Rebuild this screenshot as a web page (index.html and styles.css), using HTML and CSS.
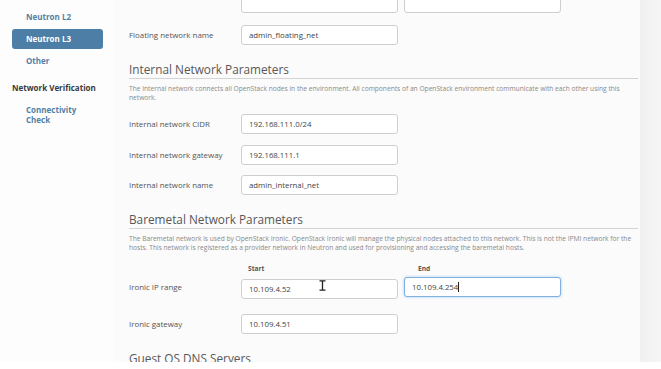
FILE: index.html
```html
<!DOCTYPE html>
<html lang="en">
<head>
  <meta charset="UTF-8">
  <title>Network Settings - Neutron L3</title>
  <link rel="stylesheet" href="styles.css">
</head>
<body>
  <div class="screen">
    <!-- Left navigation -->
    <nav class="sidebar">
      <a class="nav-link">Neutron L2</a>
      <a class="nav-link active">Neutron L3</a>
      <a class="nav-link">Other</a>
      <div class="nav-group">Network Verification</div>
      <a class="nav-link multi">Connectivity<br>Check</a>
    </nav>

    <!-- Settings form -->
    <main class="content">
      <div class="row row-cut">
        <div class="label"></div>
        <input class="field" type="text" value="">
        <input class="field" type="text" value="">
      </div>
      <div class="row">
        <div class="label">Floating network name</div>
        <input class="field" type="text" value="admin_floating_net">
      </div>

      <h3 class="section-title">Internal Network Parameters</h3>
      <p class="section-desc">The Internal network connects all OpenStack nodes in the environment. All components of an OpenStack environment communicate with each other using this network.</p>
      <div class="row">
        <div class="label">Internal network CIDR</div>
        <input class="field" type="text" value="192.168.111.0/24">
      </div>
      <div class="row">
        <div class="label">Internal network gateway</div>
        <input class="field" type="text" value="192.168.111.1">
      </div>
      <div class="row">
        <div class="label">Internal network name</div>
        <input class="field" type="text" value="admin_internal_net">
      </div>

      <h3 class="section-title">Baremetal Network Parameters</h3>
      <p class="section-desc">The Baremetal network is used by OpenStack Ironic. OpenStack Ironic will manage the physical nodes attached to this network. This is not the IPMI network for the hosts. This network is registered as a provider network in Neutron and used for provisioning and accessing the baremetal hosts.</p>
      <div class="range-head">
        <span class="range-col">Start</span>
        <span class="range-col">End</span>
      </div>
      <div class="row row-range">
        <div class="label">Ironic IP range</div>
        <div class="field-wrap">
          <input class="field" type="text" value="10.109.4.52">
          <!-- mouse I-beam pointer -->
          <svg class="ibeam" width="7" height="11" viewBox="0 0 7 11">
            <path d="M0.5 0.8h6M0.5 10.2h6M3.5 0.8v9.4" stroke="#222" stroke-width="1.3" fill="none"/>
          </svg>
        </div>
        <div class="field focus">10.109.4.254<span class="caret"></span></div>
      </div>
      <div class="row row-gap">
        <div class="label">Ironic gateway</div>
        <input class="field" type="text" value="10.109.4.51">
      </div>

      <h3 class="section-title last">Guest OS DNS Servers</h3>
    </main>

    <div class="edge"></div>
  </div>
</body>
</html>
```

FILE: styles.css
```css
/* Page frame */
body {
  margin: 0;
  background: #fff;
  font-family: "Open Sans", "Noto Sans", sans-serif;
  color: #555;
}
.screen {
  display: flex;
  height: 362px;
  overflow: hidden;
  background: #fbfbfb;
}

/* Sidebar */
.sidebar {
  width: 115px;
  flex: none;
  box-sizing: border-box;
  padding: 7px 0 0 12px;
  background: #fdfdfd;
}
.nav-link {
  display: block;
  width: 91px;
  height: 20px;
  box-sizing: border-box;
  margin-bottom: 2px;
  padding-left: 14px;
  line-height: 20px;
  font-size: 8px;
  font-weight: bold;
  color: #5380a5;
  border-radius: 3px;
}
.nav-link.active {
  background: #4d7ea6;
  color: #fff;
}
.nav-link.multi {
  height: auto;
  margin-top: 10px;
  line-height: 9.5px;
}
.nav-group {
  margin-top: 10px;
  line-height: 14px;
  font-size: 8px;
  font-weight: bold;
  color: #3a3a3a;
}

/* Main column */
.content {
  flex: 1;
  padding: 0 2px 0 14px;
}
.row {
  display: flex;
  align-items: center;
  gap: 6px;
  margin-bottom: 10.5px;
}
.row-cut {
  margin-top: -7px;
  margin-bottom: 12px;
}
.label {
  width: 106px;
  flex: none;
  font-size: 7.9px;
  color: #555;
}
.field {
  width: 157px;
  height: 20px;
  box-sizing: border-box;
  margin: 0;
  padding: 0 7px;
  border: 1px solid #cfcfcf;
  border-radius: 3px;
  background: #fff;
  font-family: "Open Sans", "Noto Sans", sans-serif;
  font-size: 7.8px;
  line-height: 18px;
  color: #444;
  outline: none;
}
.field.focus {
  display: flex;
  align-items: center;
  border-color: #7fb0de;
  box-shadow: 0 0 3px rgba(102, 175, 233, 0.6);
}
.caret {
  display: inline-block;
  width: 1px;
  height: 10px;
  background: #222;
}
.field-wrap {
  position: relative;
}
.ibeam {
  position: absolute;
  left: 78px;
  top: 5px;
}

/* Section headers */
.section-title {
  margin: 16px 0 0;
  padding-bottom: 1px;
  border-bottom: 1px solid #d4d4d4;
  font-size: 11.8px;
  font-weight: normal;
  line-height: 16px;
  color: #585858;
}
.section-title.last {
  border-bottom: 0;
}
.section-desc {
  margin: 5px 0 12px;
  font-size: 6.65px;
  line-height: 9px;
  color: #8a8a8a;
}

/* Start / End captions above range inputs */
.range-head {
  display: flex;
  gap: 6px;
  margin: 11px 0 1px 112px;
  line-height: 10px;
}
.range-col {
  width: 157px;
  padding-left: 7px;
  font-size: 6.6px;
  font-weight: bold;
  color: #555;
}
.row-range {
  margin-bottom: 15px;
}
.row-gap {
  margin-bottom: 0;
}

/* Right edge shading */
.edge {
  width: 21px;
  flex: none;
  background: linear-gradient(to right, #f0f0f0, #f6f6f6);
}
```
